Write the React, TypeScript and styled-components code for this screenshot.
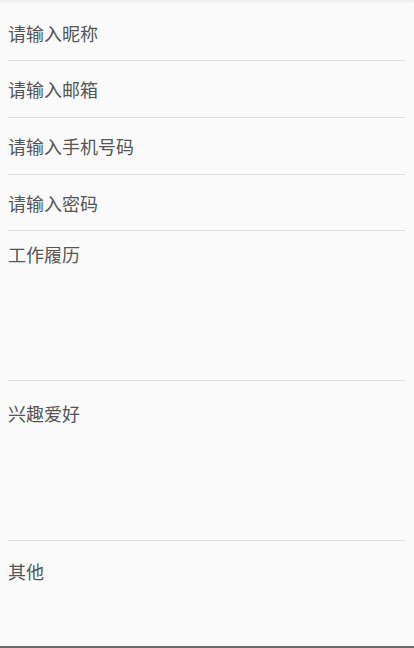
import React from "react";
import styled, { createGlobalStyle } from "styled-components";

// Глобальные стили страницы
const GlobalStyle = createGlobalStyle`
  html, body {
    margin: 0;
    padding: 0;
    background: #fafafa;
  }
  * {
    box-sizing: border-box;
  }
`;

// Описание полей формы
const inputs = [
  { hint: "请输入昵称", type: "text", height: 57, pad: 17 },
  { hint: "请输入邮箱", type: "email", height: 57, pad: 16 },
  { hint: "请输入手机号码", type: "tel", height: 57, pad: 16 },
  { hint: "请输入密码", type: "password", height: 56, pad: 16 },
];

const areas = [
  { hint: "工作履历", height: 150, pad: 11, line: true },
  { hint: "兴趣爱好", height: 160, pad: 20, line: true },
  { hint: "其他", height: 105, pad: 18, line: false },
];

function App() {
  return (
    <>
      <GlobalStyle />
      <Screen>
        <TopShadow />
        <Form>
          {inputs.map((f) => (
            <TextField
              key={f.hint}
              type={f.type}
              placeholder={f.hint}
              $height={f.height}
              $pad={f.pad}
            />
          ))}
          {areas.map((a) => (
            <TextArea
              key={a.hint}
              placeholder={a.hint}
              $height={a.height}
              $pad={a.pad}
              $line={a.line}
            />
          ))}
        </Form>
      </Screen>
    </>
  );
}

const Screen = styled.div`
  height: 648px;
  display: flex;
  flex-direction: column;
  background: #fafafa;
  border-bottom: 2px solid #6b6b6b;
  font-family: "Noto Sans CJK SC", "Noto Sans", sans-serif;
`;

const TopShadow = styled.div`
  height: 4px;
  flex-shrink: 0;
  background: linear-gradient(#ececec, #fafafa);
`;

const Form = styled.div`
  display: flex;
  flex-direction: column;
  padding: 0 9px 0 8px;
`;

const fieldBase = `
  display: block;
  width: 100%;
  border: none;
  outline: none;
  background: transparent;
  font-family: "Noto Sans CJK SC", "Noto Sans", sans-serif;
  font-size: 18px;
  line-height: 24px;
  color: #555555;
  padding-left: 0;
  padding-right: 0;
  margin: 0;

  &::placeholder {
    color: #555555;
    opacity: 1;
  }
`;

const TextField = styled.input<{ $height: number; $pad: number }>`
  ${fieldBase}
  height: ${(p) => p.$height}px;
  padding-top: ${(p) => p.$pad}px;
  padding-bottom: ${(p) => p.$height - p.$pad - 25}px;
  border-bottom: 1px solid #dedede;
`;

const TextArea = styled.textarea<{
  $height: number;
  $pad: number;
  $line: boolean;
}>`
  ${fieldBase}
  resize: none;
  height: ${(p) => p.$height}px;
  padding-top: ${(p) => p.$pad}px;
  padding-bottom: 0;
  border-bottom: ${(p) => (p.$line ? "1px solid #dedede" : "none")};
  overflow: hidden;
`;

export default App;
